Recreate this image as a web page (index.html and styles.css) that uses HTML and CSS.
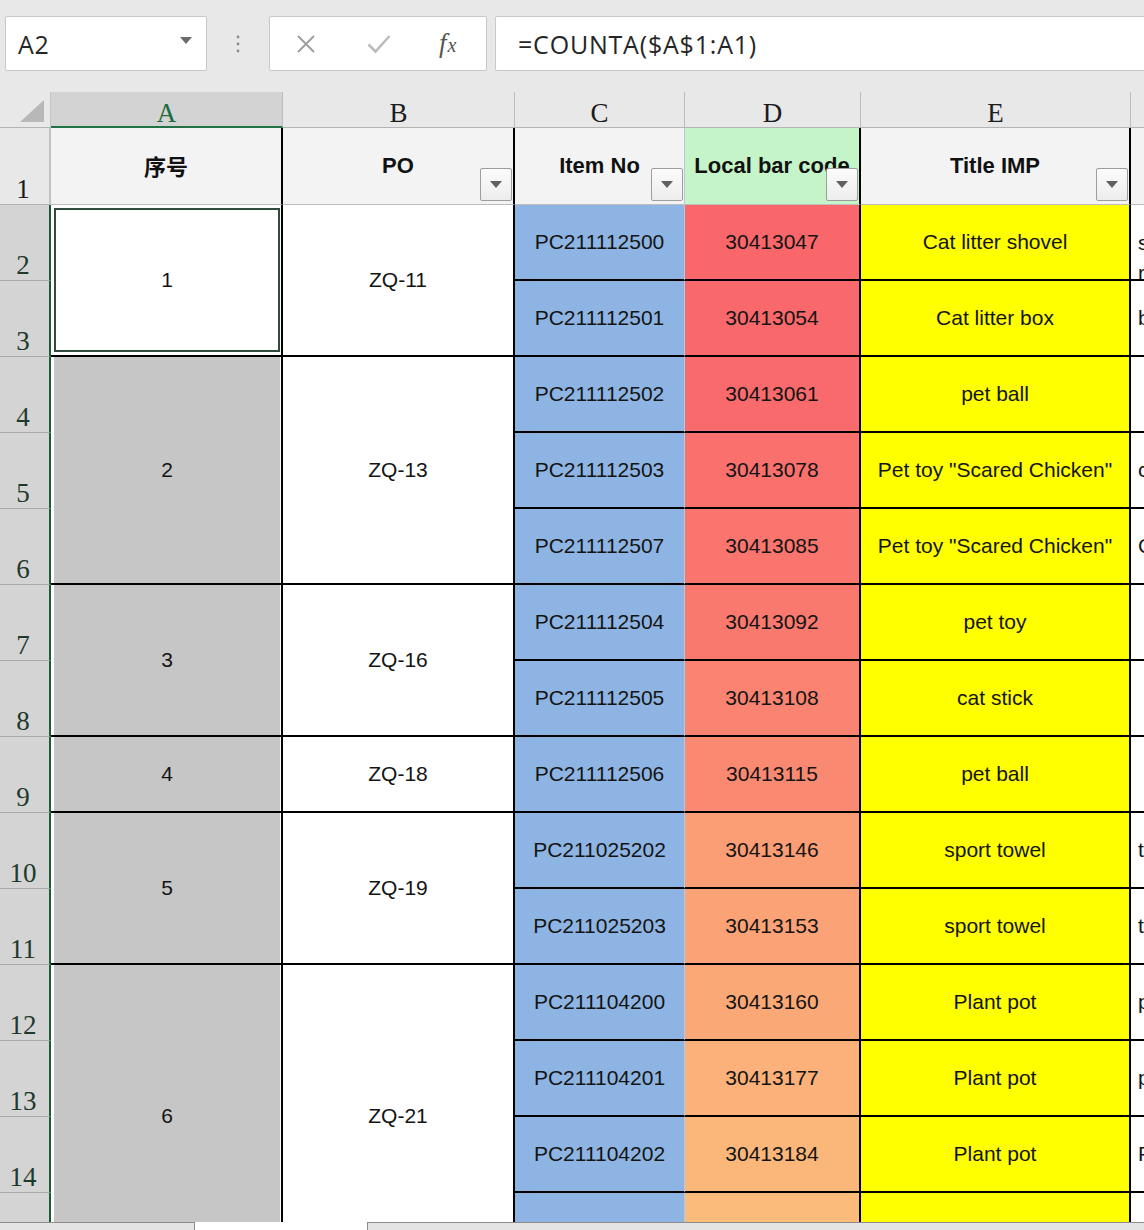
FILE: index.html
```html
<!DOCTYPE html>
<html lang="zh">
<head>
<meta charset="utf-8">
<title>Sheet</title>
<link rel="stylesheet" href="styles.css">
</head>
<body>
<div class="app">
  <div class="toolbar">
    <div class="namebox">
      <span>A2</span>
      <svg class="caret" width="12" height="7" viewBox="0 0 12 7"><polygon points="0,0 12,0 6,7" fill="#6b6b6b"/></svg>
    </div>
    <div class="dots">
      <svg width="4" height="18" viewBox="0 0 4 18"><circle cx="2" cy="2" r="1.4" fill="#8a8a8a"/><circle cx="2" cy="9" r="1.4" fill="#8a8a8a"/><circle cx="2" cy="16" r="1.4" fill="#8a8a8a"/></svg>
    </div>
    <div class="fbuttons">
      <svg class="icon-x" width="20" height="20" viewBox="0 0 20 20"><path d="M2 2 L18 18 M18 2 L2 18" stroke="#9c9c9c" stroke-width="1.8" fill="none"/></svg>
      <svg class="icon-ok" width="24" height="20" viewBox="0 0 24 20"><path d="M1.5 10.5 L8.5 17.5 L22.5 2" stroke="#bcbcbc" stroke-width="2.6" fill="none"/></svg>
      <span class="fx"><i>f</i><i class="fxx">x</i></span>
    </div>
    <div class="formula">=COUNTA($A$1:A1)</div>
  </div>

  <div class="sheet">
    <div class="grid">
      <!-- column headers -->
      <div class="corner"><svg width="49" height="36" viewBox="0 0 49 36"><polygon points="44,8 44,30 20,30" fill="#b8b8b8"/></svg></div>
      <div class="ch sel">A</div>
      <div class="ch">B</div>
      <div class="ch">C</div>
      <div class="ch">D</div>
      <div class="ch">E</div>
      <div class="ch">F</div>

      <!-- row 1 -->
      <div class="rh r1">1</div>
      <div class="h ca cjk">序号</div>
      <div class="h cb">PO<span class="filter"><svg width="12" height="7" viewBox="0 0 12 7"><polygon points="0,0 12,0 6,7" fill="#606060"/></svg></span></div>
      <div class="h cc">Item No<span class="filter"><svg width="12" height="7" viewBox="0 0 12 7"><polygon points="0,0 12,0 6,7" fill="#606060"/></svg></span></div>
      <div class="h cd green">Local bar code<span class="filter"><svg width="12" height="7" viewBox="0 0 12 7"><polygon points="0,0 12,0 6,7" fill="#606060"/></svg></span></div>
      <div class="h ce">Title IMP<span class="filter"><svg width="12" height="7" viewBox="0 0 12 7"><polygon points="0,0 12,0 6,7" fill="#606060"/></svg></span></div>
      <div class="h cf"></div>

      <!-- row 2 -->
      <div class="rh">2</div>
      <div class="acell active span2"><div class="fill">1</div></div>
      <div class="bcell span2">ZQ-11</div>
      <div class="cell cc blue">PC211112500</div>
      <div class="cell cd d2">30413047</div>
      <div class="cell ce yellow">Cat litter shovel</div>
      <div class="cell cf fcell top">scoop<br>rake</div>

      <!-- row 3 -->
      <div class="rh">3</div>
      <div class="cell cc blue">PC211112501</div>
      <div class="cell cd d3">30413054</div>
      <div class="cell ce yellow">Cat litter box</div>
      <div class="cell cf fcell">box</div>

      <!-- row 4 -->
      <div class="rh">4</div>
      <div class="acell span3"><div class="fill">2</div></div>
      <div class="bcell span3">ZQ-13</div>
      <div class="cell cc blue">PC211112502</div>
      <div class="cell cd d4">30413061</div>
      <div class="cell ce yellow">pet ball</div>
      <div class="cell cf fcell"></div>

      <!-- row 5 -->
      <div class="rh">5</div>
      <div class="cell cc blue">PC211112503</div>
      <div class="cell cd d5">30413078</div>
      <div class="cell ce yellow">Pet toy "Scared Chicken"</div>
      <div class="cell cf fcell">chicken</div>

      <!-- row 6 -->
      <div class="rh">6</div>
      <div class="cell cc blue">PC211112507</div>
      <div class="cell cd d6">30413085</div>
      <div class="cell ce yellow">Pet toy "Scared Chicken"</div>
      <div class="cell cf fcell">Chicken</div>

      <!-- row 7 -->
      <div class="rh">7</div>
      <div class="acell span2"><div class="fill">3</div></div>
      <div class="bcell span2">ZQ-16</div>
      <div class="cell cc blue">PC211112504</div>
      <div class="cell cd d7">30413092</div>
      <div class="cell ce yellow">pet toy</div>
      <div class="cell cf fcell"></div>

      <!-- row 8 -->
      <div class="rh">8</div>
      <div class="cell cc blue">PC211112505</div>
      <div class="cell cd d8">30413108</div>
      <div class="cell ce yellow">cat stick</div>
      <div class="cell cf fcell"></div>

      <!-- row 9 -->
      <div class="rh">9</div>
      <div class="acell"><div class="fill">4</div></div>
      <div class="bcell">ZQ-18</div>
      <div class="cell cc blue">PC211112506</div>
      <div class="cell cd d9">30413115</div>
      <div class="cell ce yellow">pet ball</div>
      <div class="cell cf fcell"></div>

      <!-- row 10 -->
      <div class="rh">10</div>
      <div class="acell span2"><div class="fill">5</div></div>
      <div class="bcell span2">ZQ-19</div>
      <div class="cell cc blue">PC211025202</div>
      <div class="cell cd d10">30413146</div>
      <div class="cell ce yellow">sport towel</div>
      <div class="cell cf fcell">towel</div>

      <!-- row 11 -->
      <div class="rh">11</div>
      <div class="cell cc blue">PC211025203</div>
      <div class="cell cd d11">30413153</div>
      <div class="cell ce yellow">sport towel</div>
      <div class="cell cf fcell">towel</div>

      <!-- row 12 -->
      <div class="rh">12</div>
      <div class="acell span4"><div class="fill">6</div></div>
      <div class="bcell span4">ZQ-21</div>
      <div class="cell cc blue">PC211104200</div>
      <div class="cell cd d12">30413160</div>
      <div class="cell ce yellow">Plant pot</div>
      <div class="cell cf fcell">pot</div>

      <!-- row 13 -->
      <div class="rh">13</div>
      <div class="cell cc blue">PC211104201</div>
      <div class="cell cd d13">30413177</div>
      <div class="cell ce yellow">Plant pot</div>
      <div class="cell cf fcell">pot</div>

      <!-- row 14 -->
      <div class="rh">14</div>
      <div class="cell cc blue">PC211104202</div>
      <div class="cell cd d14">30413184</div>
      <div class="cell ce yellow">Plant pot</div>
      <div class="cell cf fcell">Pot</div>

      <!-- row 15 -->
      <div class="rh">15</div>
      <div class="cell cc blue">PC211104203</div>
      <div class="cell cd d15">30413191</div>
      <div class="cell ce yellow">Plant pot</div>
      <div class="cell cf fcell">Pot</div>
    </div>
  </div>

  <div class="bottombar">
    <div class="tabs"></div>
    <div class="bgap"></div>
    <div class="hscroll"></div>
  </div>
</div>
</body>
</html>
```

FILE: styles.css
```css
* { box-sizing: border-box; }
html, body { margin: 0; padding: 0; }
body {
  width: 1144px;
  height: 1230px;
  overflow: hidden;
  background: #e8e8e8;
  font-family: "Liberation Sans", Arial, sans-serif;
}
.app { display: flex; flex-direction: column; height: 1230px; width: 1144px; overflow: hidden; }

/* ---------- toolbar ---------- */
.toolbar {
  height: 92px;
  flex: none;
  display: flex;
  align-items: flex-start;
  padding: 16px 0 0 5px;
  background: #e8e8e8;
}
.namebox {
  width: 202px;
  height: 55px;
  flex: none;
  background: #fff;
  border: 1px solid #c8c8c8;
  border-radius: 2px;
  display: flex;
  align-items: center;
  justify-content: space-between;
  padding: 0 14px 0 12px;
  font-family: "Open Sans", "Noto Sans", sans-serif;
  font-size: 25px;
  letter-spacing: 0.8px;
  color: #262626;
}
.caret { margin-top: -6px; }
.dots {
  width: 62px;
  height: 55px;
  flex: none;
  display: flex;
  align-items: center;
  justify-content: center;
}
.fbuttons {
  width: 218px;
  height: 55px;
  flex: none;
  background: #fff;
  border: 1px solid #c8c8c8;
  border-radius: 2px;
  display: flex;
  align-items: center;
  padding-left: 26px;
}
.icon-ok { margin-left: 51px; }
.fx {
  margin-left: 48px;
  font-family: "Liberation Serif", serif;
  font-size: 27px;
  color: #555;
  line-height: 1;
}
.fx .fxx { font-size: 20px; margin-left: 1px; }
.formula {
  flex: 1;
  margin-left: 8px;
  margin-right: -10px;
  height: 55px;
  background: #fff;
  border: 1px solid #c8c8c8;
  border-radius: 2px;
  padding-left: 22px;
  display: flex;
  align-items: center;
  font-family: "Open Sans", "Noto Sans", sans-serif;
  font-size: 25px;
  letter-spacing: 0.8px;
  color: #262626;
}

/* ---------- sheet ---------- */
.sheet {
  height: 1130px;
  flex: none;
  overflow: hidden;
  background: #fff;
}
.grid {
  display: grid;
  width: 1331px;
  grid-template-columns: 51px 232px 232px 170px 176px 270px 200px;
  grid-template-rows: 36px 77px repeat(14, 76px);
}
.span2 { grid-row: span 2; }
.span3 { grid-row: span 3; }
.span4 { grid-row: span 4; }

.corner {
  background: #e8e8e8;
  border-right: 1px solid #c4c4c4;
  border-bottom: 1px solid #b4b4b4;
}
.corner svg { display: block; }
.ch {
  background: #e8e8e8;
  border-right: 1px solid #bdbdbd;
  border-bottom: 1px solid #b4b4b4;
  font-family: "Liberation Serif", "DejaVu Serif", serif;
  font-size: 27px;
  line-height: 27px;
  padding-top: 8px;
  text-align: center;
  color: #1c1c1c;
}
.ch.sel {
  background: #d3d3d3;
  border-bottom: 2px solid #217346;
  color: #1f6b42;
}

.rh {
  background: #d4d4d4;
  border-right: 2px solid #1d5b38;
  border-bottom: 1px solid #a9a9a9;
  display: flex;
  align-items: flex-end;
  justify-content: center;
  padding: 0 3px 1px 0;
  font-family: "Liberation Serif", "DejaVu Serif", serif;
  font-size: 27px;
  line-height: 27px;
  color: #1e3a2a;
}
.rh.r1 {
  background: #e8e8e8;
  border-right: 2px solid #c2c2c2;
  border-bottom: 1px solid #b4b4b4;
  color: #1c1c1c;
}

/* header row */
.h {
  position: relative;
  background: #f3f3f3;
  border-bottom: 1px solid #bdbdbd;
  display: flex;
  align-items: center;
  justify-content: center;
  font-weight: bold;
  font-size: 22px;
  color: #111;
  white-space: nowrap;
  overflow: hidden;
}
.h.cjk { font-family: "Noto Sans CJK SC", "Liberation Sans", sans-serif; font-size: 22px; padding-bottom: 3px; }
.h.green { background: #c5f4c9; }
.filter {
  position: absolute;
  right: 1px;
  bottom: 3px;
  width: 32px;
  height: 33px;
  background: linear-gradient(#fbfbfb, #ededed);
  border: 1px solid #9d9d9d;
  border-radius: 2px;
  display: flex;
  align-items: center;
  justify-content: center;
}

/* column borders */
.ca { border-right: 2px solid #000; }
.cb { border-right: 2px solid #000; }
.cc { border-right: 1px solid #b7c8dc; }
.cd { border-right: 2px solid #000; }
.ce { border-right: 2px solid #000; }

/* data cells */
.cell {
  display: flex;
  align-items: center;
  justify-content: center;
  font-size: 21px;
  color: #141414;
  border-bottom: 2px solid #000;
  white-space: nowrap;
  overflow: hidden;
}
.acell {
  background: #fff;
  padding: 0 1px 0 3px;
  border-right: 2px solid #000;
  border-bottom: 2px solid #000;
}
.acell .fill {
  width: 100%;
  height: 100%;
  background: #c6c6c6;
  display: flex;
  align-items: center;
  justify-content: center;
  font-size: 21px;
  color: #141414;
}
.acell.active { padding: 3px 1px 3px 3px; }
.acell.active .fill {
  background: #fff;
  border: 2px solid #2e4b3b;
}
.bcell {
  background: #fff;
  border-right: 2px solid #000;
  border-bottom: 2px solid #000;
  display: flex;
  align-items: center;
  justify-content: center;
  font-size: 21px;
  color: #141414;
}
.blue { background: #8db4e2; }
.yellow { background: #ffff00; }
.fcell {
  background: #fff;
  justify-content: flex-start;
  padding-left: 7px;
  line-height: 30px;
}
.fcell.top { align-items: flex-start; padding-top: 23px; }

/* colour scale for local bar code */
.d2 { background: #f9676b; }
.d3 { background: #f9686b; }
.d4 { background: #f96a6c; }
.d5 { background: #f9706d; }
.d6 { background: #fa756e; }
.d7 { background: #fa796f; }
.d8 { background: #fa8471; }
.d9 { background: #fa8972; }
.d10 { background: #fb9d75; }
.d11 { background: #fba276; }
.d12 { background: #fba877; }
.d13 { background: #fbb179; }
.d14 { background: #fbb77a; }
.d15 { background: #fbbc7b; }

/* ---------- bottom bar ---------- */
.bottombar {
  height: 8px;
  flex: none;
  display: flex;
  background: #fff;
}
.tabs {
  width: 195px;
  background: #e4e4e4;
  border-top: 1px solid #8c8c8c;
  border-right: 1px solid #8c8c8c;
}
.bgap { width: 172px; background: #fff; }
.hscroll {
  flex: 1;
  background: #e4e4e4;
  border-top: 1px solid #8c8c8c;
  border-left: 1px solid #8c8c8c;
}
```
